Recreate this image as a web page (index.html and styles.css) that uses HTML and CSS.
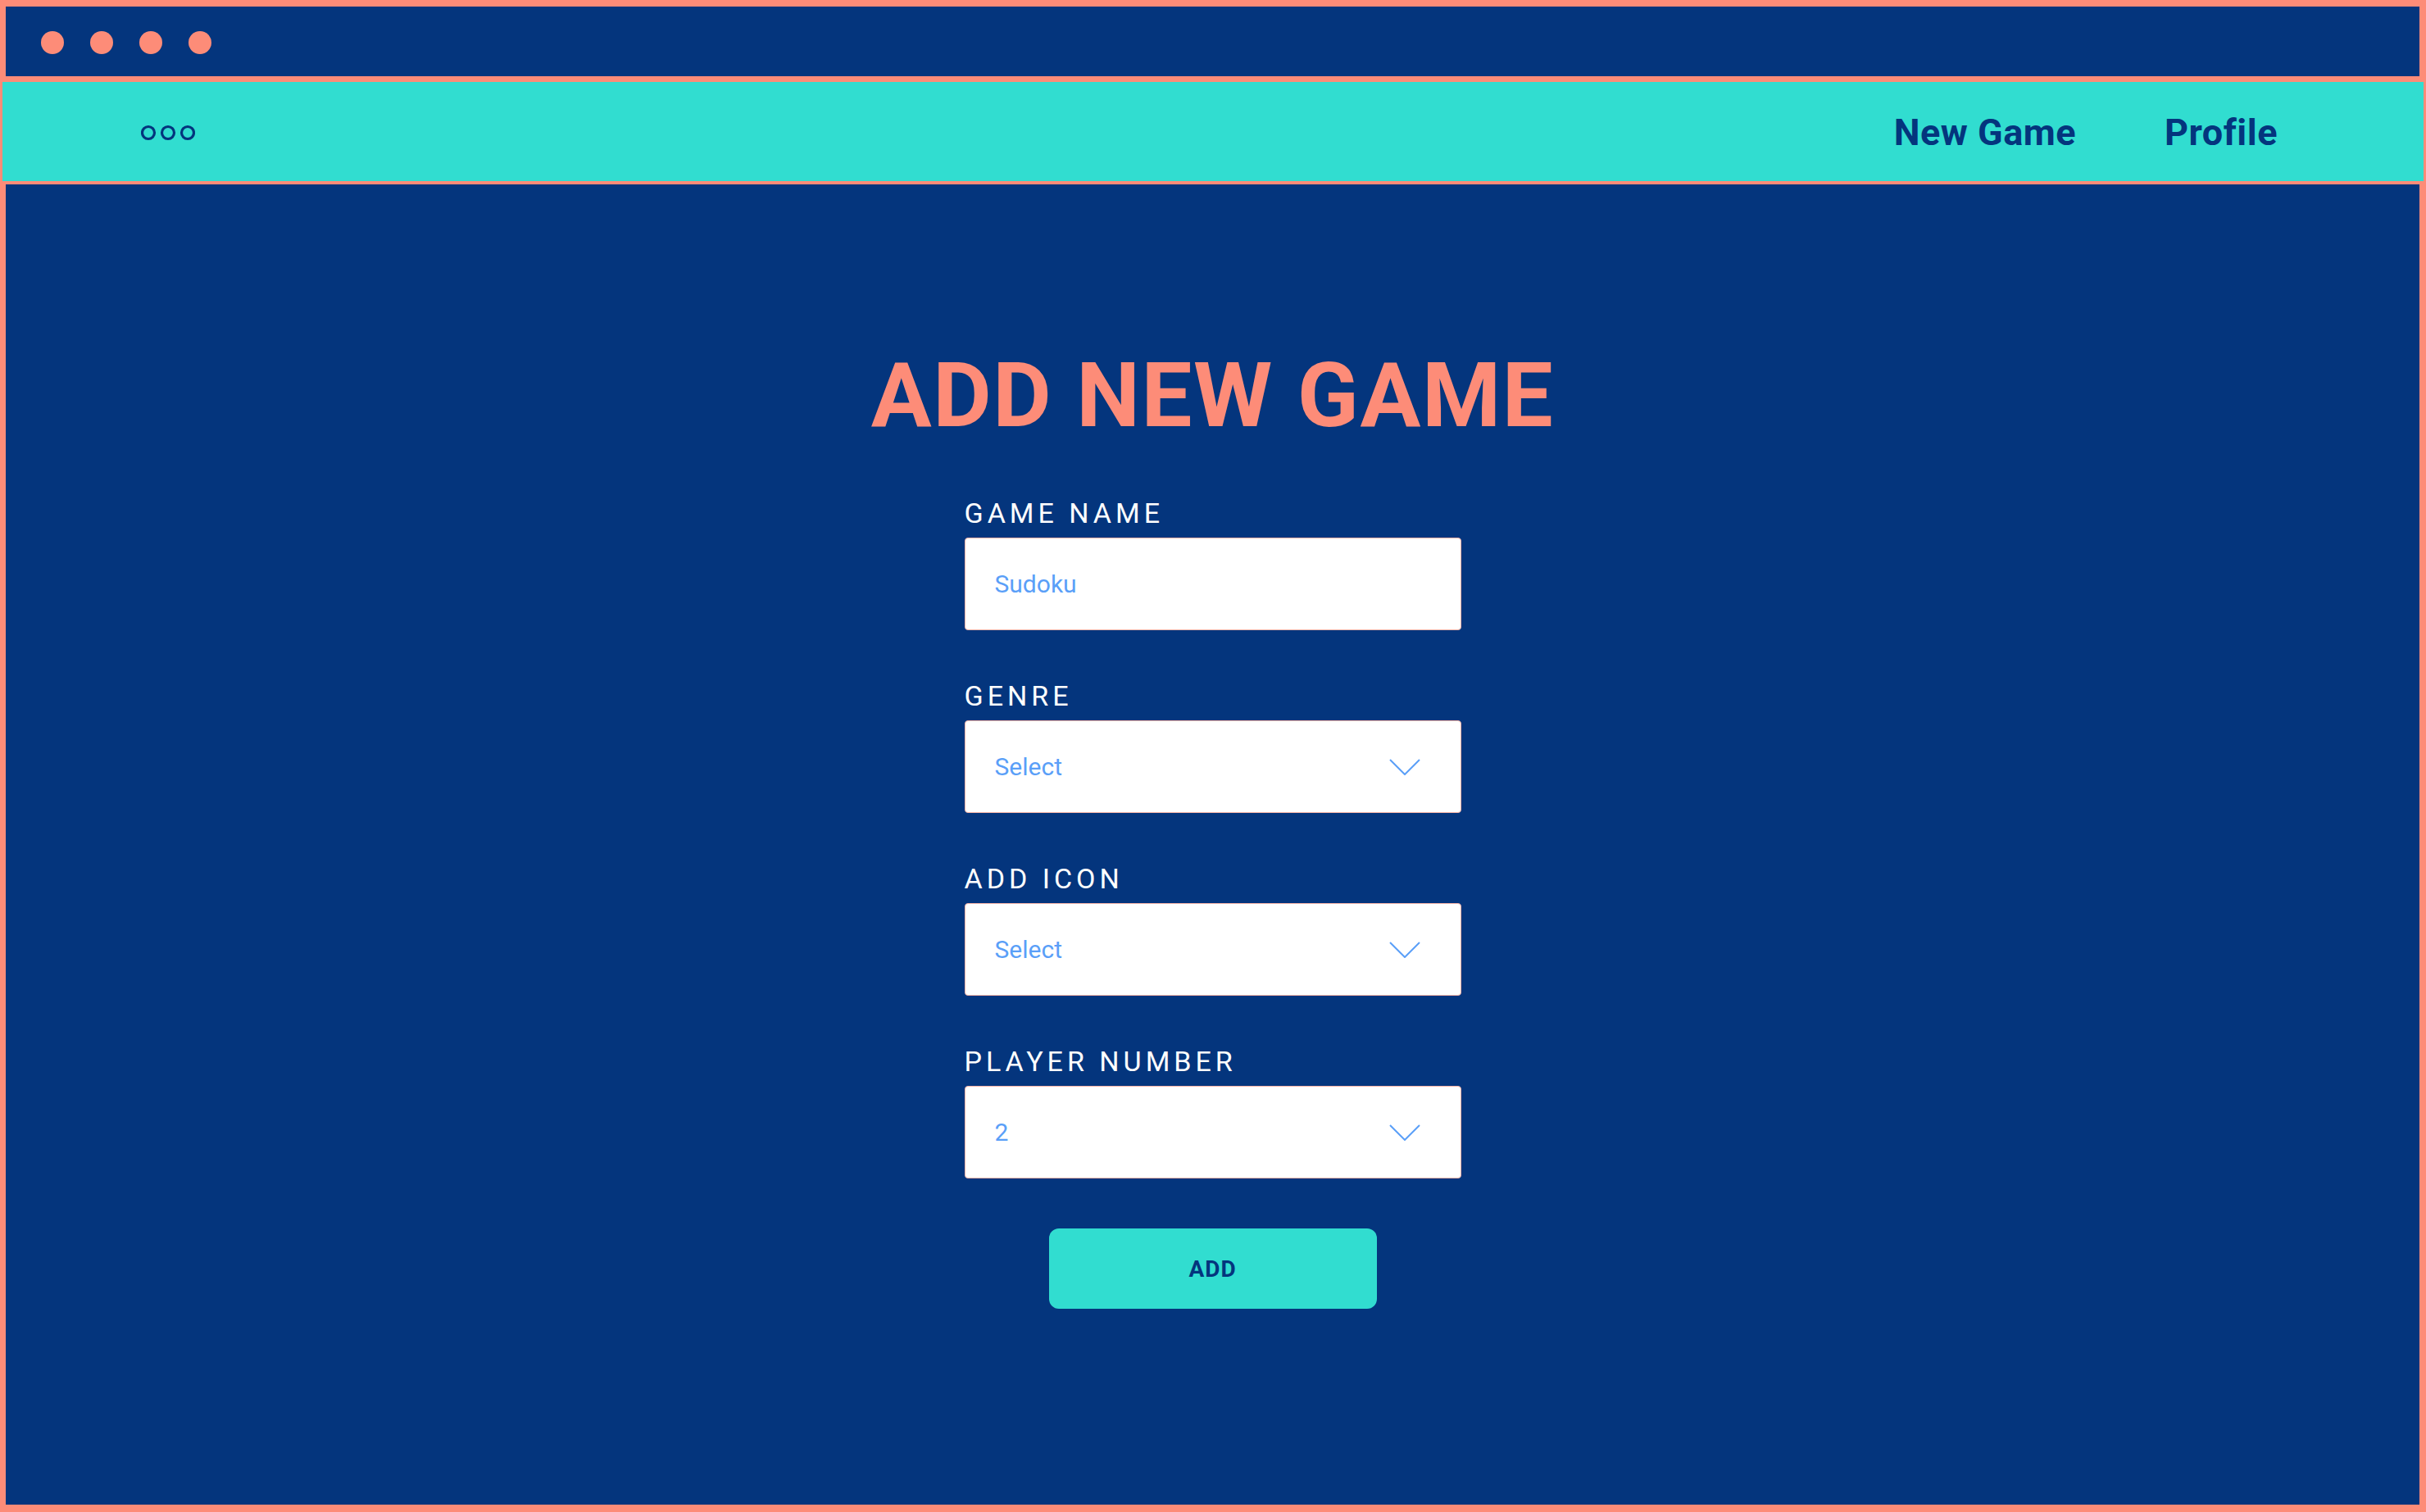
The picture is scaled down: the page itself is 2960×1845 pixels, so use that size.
FILE: index.html
```html
<!DOCTYPE html>
<html lang="en">
<head>
<meta charset="utf-8">
<title>Add New Game</title>
<link rel="stylesheet" href="styles.css">
</head>
<body>
<div class="frame">
  <div class="titlebar">
    <span class="dot"></span><span class="dot"></span><span class="dot"></span><span class="dot"></span>
  </div>
  <nav class="nav">
    <svg class="more" width="66" height="22" viewBox="0 0 66 22" aria-hidden="true">
      <circle cx="9" cy="11" r="7.5" fill="none" stroke="#04357d" stroke-width="3.2"/>
      <circle cx="33" cy="11" r="7.5" fill="none" stroke="#04357d" stroke-width="3.2"/>
      <circle cx="57" cy="11" r="7.5" fill="none" stroke="#04357d" stroke-width="3.2"/>
    </svg>
    <div class="links">
      <a class="link" href="#">New Game</a>
      <a class="link" href="#">Profile</a>
    </div>
  </nav>
  <main class="main">
    <h1 class="title">ADD NEW GAME</h1>
    <form class="form">
      <div class="field">
        <label class="label">GAME NAME</label>
        <div class="box"><span class="value">Sudoku</span></div>
      </div>
      <div class="field">
        <label class="label">GENRE</label>
        <div class="box"><span class="value">Select</span>
          <svg class="chev" width="38" height="20" viewBox="0 0 38 20" aria-hidden="true"><polyline points="1,1 19,19 37,1" fill="none" stroke="#5a9ff8" stroke-width="2"/></svg>
        </div>
      </div>
      <div class="field">
        <label class="label">ADD ICON</label>
        <div class="box"><span class="value">Select</span>
          <svg class="chev" width="38" height="20" viewBox="0 0 38 20" aria-hidden="true"><polyline points="1,1 19,19 37,1" fill="none" stroke="#5a9ff8" stroke-width="2"/></svg>
        </div>
      </div>
      <div class="field">
        <label class="label">PLAYER NUMBER</label>
        <div class="box"><span class="value">2</span>
          <svg class="chev" width="38" height="20" viewBox="0 0 38 20" aria-hidden="true"><polyline points="1,1 19,19 37,1" fill="none" stroke="#5a9ff8" stroke-width="2"/></svg>
        </div>
      </div>
      <div class="actions">
        <button class="btn" type="button">ADD</button>
      </div>
    </form>
  </main>
</div>
</body>
</html>
```
FILE: styles.css
```css
* { box-sizing: border-box; }
html, body { margin: 0; padding: 0; }
body {
  background: #fd8c78;
  font-family: Roboto, "Noto Sans", "Liberation Sans", sans-serif;
}
.frame {
  height: 1845px;
  padding: 8px 8px 9px 7px;
  display: flex;
  flex-direction: column;
}
.titlebar {
  height: 85px;
  background: #04357d;
  display: flex;
  align-items: center;
  gap: 32px;
  padding: 3px 0 0 43px;
}
.dot {
  width: 28px;
  height: 28px;
  border-radius: 50%;
  background: #fd8c78;
}
.nav {
  margin: 7px -5px 0 -4px;
  height: 121px;
  background: #31ddd0;
  display: flex;
  align-items: center;
  justify-content: space-between;
  padding: 2px 178px 0 169px;
}
.more { display: block; }
.links {
  display: flex;
  gap: 108px;
}
.link {
  color: #04357d;
  text-decoration: none;
  font-weight: 700;
  font-size: 45px;
  line-height: 1;
  letter-spacing: 0.5px;
}
.main {
  margin-top: 4px;
  flex: 1;
  background: #04357d;
  display: flex;
  flex-direction: column;
  align-items: center;
  padding-top: 203px;
}
.title {
  margin: 0;
  color: #fd8c78;
  font-size: 110px;
  line-height: 110px;
  font-weight: 700;
  letter-spacing: 1.6px;
}
.form {
  width: 606px;
  margin-top: 68px;
  display: flex;
  flex-direction: column;
  gap: 60px;
}
.field {
  display: flex;
  flex-direction: column;
  gap: 10px;
}
.label {
  color: #ffffff;
  font-size: 34px;
  line-height: 40px;
  letter-spacing: 5px;
  font-weight: 400;
}
.box {
  height: 113px;
  background: #ffffff;
  border: 1px solid #f6b4a8;
  border-radius: 4px;
  display: flex;
  align-items: center;
  justify-content: space-between;
  padding: 0 49px 0 36px;
}
.value {
  color: #5a9ff8;
  font-size: 30px;
}
.chev { display: block; }
.actions {
  display: flex;
  justify-content: center;
  margin-top: 1px;
}
.btn {
  width: 400px;
  height: 98px;
  border: none;
  border-radius: 12px;
  background: #31ddd0;
  color: #04357d;
  font-family: Roboto, "Noto Sans", "Liberation Sans", sans-serif;
  font-weight: 700;
  font-size: 28px;
  letter-spacing: 1px;
  padding: 0;
}
```
